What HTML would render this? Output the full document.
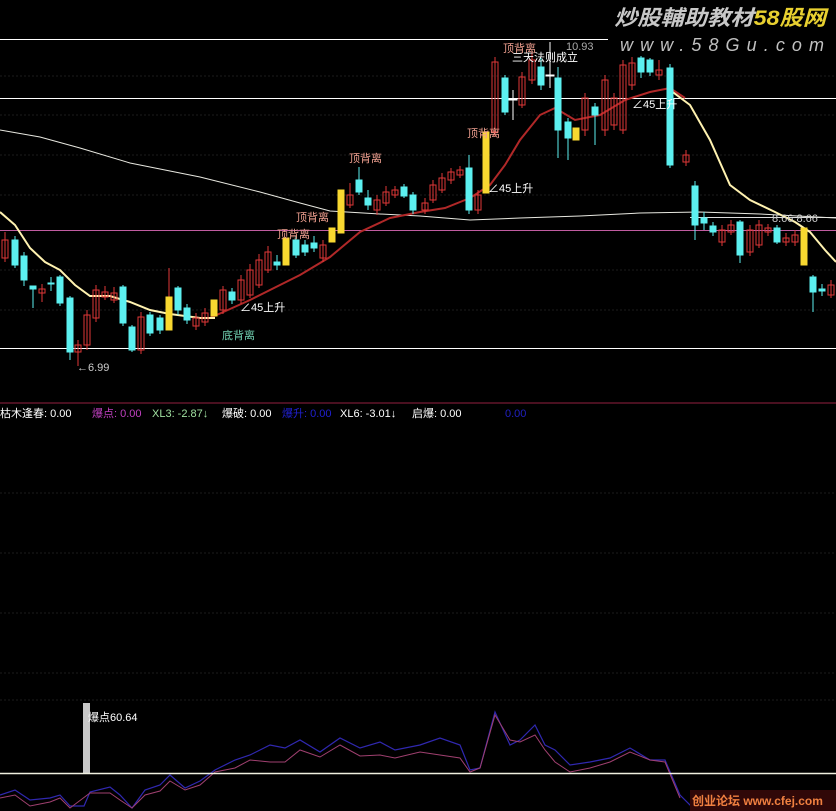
<!DOCTYPE html>
<html><head><meta charset="utf-8"><style>
html,body{margin:0;padding:0;background:#000;width:836px;height:811px;overflow:hidden}
svg{display:block}
text{font-family:"Liberation Sans","Noto Sans CJK SC",sans-serif}
</style></head><body>
<svg width="836" height="811" viewBox="0 0 836 811" xmlns="http://www.w3.org/2000/svg">
<rect width="836" height="811" fill="#000"/>
<g stroke="#1c1c1c" stroke-width="1" stroke-dasharray="2,2">
<line x1="0" y1="76" x2="836" y2="76"/><line x1="0" y1="115" x2="836" y2="115"/>
<line x1="0" y1="155" x2="836" y2="155"/><line x1="0" y1="195" x2="836" y2="195"/>
<line x1="0" y1="270" x2="836" y2="270"/><line x1="0" y1="310" x2="836" y2="310"/>
<line x1="0" y1="493" x2="836" y2="493"/><line x1="0" y1="553" x2="836" y2="553"/>
<line x1="0" y1="613" x2="836" y2="613"/><line x1="0" y1="673" x2="836" y2="673"/>
<line x1="0" y1="700" x2="836" y2="700"/>
</g>
<line x1="0" y1="403" x2="836" y2="403" stroke="#4a1020" stroke-width="2"/>
<line x1="0" y1="39.5" x2="608" y2="39.5" stroke="#fff"/>
<line x1="0" y1="98.5" x2="836" y2="98.5" stroke="#fff"/>
<line x1="0" y1="230.5" x2="836" y2="230.5" stroke="#c05ca0"/>
<line x1="690" y1="217.5" x2="836" y2="217.5" stroke="#ddd"/>
<line x1="0" y1="348.5" x2="836" y2="348.5" stroke="#fff"/>
<polyline fill="none" stroke="#e8e8e0" stroke-width="1" points="0,130 40,137 80,148 130,163 200,177 260,192 300,203 330,211 380,214 420,216 470,220 520,218 580,216 640,213 700,212 760,214 836,218"/>
<polyline fill="none" stroke="#b02828" stroke-width="2" points="210,318 250,300 280,285 300,275 330,257 360,232 390,218 420,212 445,208 470,198 490,185 505,165 520,140 540,115 555,108 575,120 600,115 625,100 650,92 670,88 685,98"/>
<polyline fill="none" stroke="#fff2b0" stroke-width="2" points="0,212 15,225 30,248 45,262 60,270 75,285 90,296 110,296 130,302 150,310 170,314 200,318 215,318"/>
<polyline fill="none" stroke="#fff2b0" stroke-width="2" points="670,90 690,105 710,140 730,185 750,200 775,212 795,222 810,232 825,250 836,262"/>
<g stroke-width="1">
<g stroke="#e03838" fill="none">
<line x1="5" y1="232" x2="5" y2="262"/><rect x="2" y="240" width="6" height="18"/>
<line x1="42" y1="284" x2="42" y2="302"/><rect x="39" y="289" width="6" height="4"/>
<line x1="78" y1="340" x2="78" y2="366"/><rect x="75" y="345" width="6" height="7"/>
<line x1="87" y1="310" x2="87" y2="350"/><rect x="84" y="315" width="6" height="30"/>
<line x1="96" y1="285" x2="96" y2="322"/><rect x="93" y="290" width="6" height="28"/>
<line x1="105" y1="286" x2="105" y2="300"/><rect x="102" y="292" width="6" height="5"/>
<line x1="114" y1="287" x2="114" y2="303"/><rect x="111" y="293" width="6" height="7"/>
<line x1="141" y1="312" x2="141" y2="354"/><rect x="138" y="317" width="6" height="33"/>
<line x1="169" y1="268" x2="169" y2="300"/>
<line x1="196" y1="313" x2="196" y2="330"/><rect x="193" y="318" width="6" height="8"/>
<line x1="205" y1="308" x2="205" y2="326"/><rect x="202" y="313" width="6" height="9"/>
<line x1="223" y1="286" x2="223" y2="314"/><rect x="220" y="290" width="6" height="20"/>
<line x1="241" y1="275" x2="241" y2="304"/><rect x="238" y="280" width="6" height="20"/>
<line x1="250" y1="264" x2="250" y2="298"/><rect x="247" y="270" width="6" height="25"/>
<line x1="259" y1="254" x2="259" y2="288"/><rect x="256" y="260" width="6" height="25"/>
<line x1="268" y1="246" x2="268" y2="273"/><rect x="265" y="252" width="6" height="18"/>
<line x1="323" y1="240" x2="323" y2="262"/><rect x="320" y="245" width="6" height="13"/>
<line x1="350" y1="183" x2="350" y2="208"/><rect x="347" y="195" width="6" height="10"/>
<line x1="377" y1="195" x2="377" y2="215"/><rect x="374" y="200" width="6" height="10"/>
<line x1="386" y1="186" x2="386" y2="206"/><rect x="383" y="192" width="6" height="11"/>
<line x1="395" y1="186" x2="395" y2="198"/><rect x="392" y="190" width="6" height="5"/>
<line x1="425" y1="198" x2="425" y2="214"/><rect x="422" y="203" width="6" height="7"/>
<line x1="433" y1="180" x2="433" y2="203"/><rect x="430" y="185" width="6" height="15"/>
<line x1="442" y1="173" x2="442" y2="193"/><rect x="439" y="178" width="6" height="12"/>
<line x1="451" y1="168" x2="451" y2="184"/><rect x="448" y="172" width="6" height="8"/>
<line x1="460" y1="166" x2="460" y2="178"/><rect x="457" y="170" width="6" height="5"/>
<line x1="478" y1="190" x2="478" y2="214"/><rect x="475" y="195" width="6" height="15"/>
<line x1="495" y1="57" x2="495" y2="136"/><rect x="492" y="62" width="6" height="70"/>
<line x1="522" y1="72" x2="522" y2="108"/><rect x="519" y="77" width="6" height="28"/>
<line x1="532" y1="52" x2="532" y2="84"/><rect x="529" y="60" width="6" height="20"/>
<line x1="585" y1="93" x2="585" y2="136"/><rect x="582" y="98" width="6" height="32"/>
<line x1="605" y1="75" x2="605" y2="136"/><rect x="602" y="80" width="6" height="50"/>
<line x1="614" y1="93" x2="614" y2="130"/><rect x="611" y="98" width="6" height="27"/>
<line x1="623" y1="60" x2="623" y2="134"/><rect x="620" y="65" width="6" height="65"/>
<line x1="632" y1="57" x2="632" y2="90"/><rect x="629" y="63" width="6" height="22"/>
<line x1="659" y1="60" x2="659" y2="80"/><rect x="656" y="70" width="6" height="5"/>
<line x1="686" y1="150" x2="686" y2="166"/><rect x="683" y="155" width="6" height="7"/>
<line x1="722" y1="225" x2="722" y2="246"/><rect x="719" y="230" width="6" height="12"/>
<line x1="731" y1="220" x2="731" y2="235"/><rect x="728" y="225" width="6" height="7"/>
<line x1="750" y1="225" x2="750" y2="256"/><rect x="747" y="230" width="6" height="22"/>
<line x1="759" y1="220" x2="759" y2="248"/><rect x="756" y="225" width="6" height="20"/>
<line x1="768" y1="224" x2="768" y2="236"/><rect x="765" y="228" width="6" height="4"/>
<line x1="786" y1="233" x2="786" y2="246"/><rect x="783" y="238" width="6" height="4"/>
<line x1="795" y1="230" x2="795" y2="246"/><rect x="792" y="235" width="6" height="7"/>
<line x1="831" y1="280" x2="831" y2="298"/><rect x="828" y="285" width="6" height="10"/>
</g>
<g stroke="#5cf0f0" fill="#5cf0f0">
<line x1="15" y1="236" x2="15" y2="268"/><rect x="12" y="240" width="6" height="25"/>
<line x1="24" y1="252" x2="24" y2="286"/><rect x="21" y="256" width="6" height="24"/>
<line x1="33" y1="286" x2="33" y2="308"/><rect x="30" y="286" width="6" height="3"/>
<line x1="51" y1="277" x2="51" y2="291"/><rect x="48" y="283" width="6" height="1"/>
<line x1="60" y1="275" x2="60" y2="306"/><rect x="57" y="277" width="6" height="26"/>
<line x1="70" y1="296" x2="70" y2="360"/><rect x="67" y="298" width="6" height="54"/>
<line x1="123" y1="285" x2="123" y2="326"/><rect x="120" y="287" width="6" height="36"/>
<line x1="132" y1="325" x2="132" y2="352"/><rect x="129" y="327" width="6" height="23"/>
<line x1="150" y1="312" x2="150" y2="336"/><rect x="147" y="315" width="6" height="18"/>
<line x1="160" y1="315" x2="160" y2="334"/><rect x="157" y="318" width="6" height="12"/>
<line x1="178" y1="286" x2="178" y2="315"/><rect x="175" y="288" width="6" height="22"/>
<line x1="187" y1="304" x2="187" y2="324"/><rect x="184" y="308" width="6" height="12"/>
<line x1="232" y1="288" x2="232" y2="304"/><rect x="229" y="292" width="6" height="8"/>
<line x1="277" y1="255" x2="277" y2="270"/><rect x="274" y="262" width="6" height="3"/>
<line x1="296" y1="236" x2="296" y2="258"/><rect x="293" y="240" width="6" height="15"/>
<line x1="305" y1="240" x2="305" y2="256"/><rect x="302" y="245" width="6" height="7"/>
<line x1="314" y1="236" x2="314" y2="252"/><rect x="311" y="243" width="6" height="5"/>
<line x1="359" y1="167" x2="359" y2="195"/><rect x="356" y="180" width="6" height="12"/>
<line x1="368" y1="190" x2="368" y2="210"/><rect x="365" y="198" width="6" height="7"/>
<line x1="404" y1="184" x2="404" y2="198"/><rect x="401" y="187" width="6" height="9"/>
<line x1="413" y1="192" x2="413" y2="214"/><rect x="410" y="195" width="6" height="15"/>
<line x1="469" y1="155" x2="469" y2="214"/><rect x="466" y="168" width="6" height="42"/>
<line x1="505" y1="75" x2="505" y2="115"/><rect x="502" y="78" width="6" height="34"/>
<line x1="541" y1="58" x2="541" y2="90"/><rect x="538" y="67" width="6" height="18"/>
<line x1="558" y1="67" x2="558" y2="158"/><rect x="555" y="78" width="6" height="52"/>
<line x1="568" y1="118" x2="568" y2="160"/><rect x="565" y="122" width="6" height="16"/>
<line x1="595" y1="103" x2="595" y2="145"/><rect x="592" y="107" width="6" height="8"/>
<line x1="641" y1="56" x2="641" y2="78"/><rect x="638" y="58" width="6" height="14"/>
<line x1="650" y1="58" x2="650" y2="76"/><rect x="647" y="60" width="6" height="12"/>
<line x1="670" y1="64" x2="670" y2="168"/><rect x="667" y="68" width="6" height="97"/>
<line x1="695" y1="181" x2="695" y2="240"/><rect x="692" y="186" width="6" height="39"/>
<line x1="704" y1="212" x2="704" y2="230"/><rect x="701" y="218" width="6" height="5"/>
<line x1="713" y1="222" x2="713" y2="236"/><rect x="710" y="226" width="6" height="6"/>
<line x1="740" y1="220" x2="740" y2="263"/><rect x="737" y="222" width="6" height="33"/>
<line x1="777" y1="225" x2="777" y2="244"/><rect x="774" y="228" width="6" height="14"/>
<line x1="813" y1="275" x2="813" y2="312"/><rect x="810" y="277" width="6" height="15"/>
<line x1="822" y1="284" x2="822" y2="296"/><rect x="819" y="289" width="6" height="2"/>
</g>
<g stroke="#ffffff" fill="#ffffff">
<line x1="513" y1="90" x2="513" y2="120"/><rect x="509" y="99" width="8" height="1"/>
<line x1="550" y1="42" x2="550" y2="88"/><rect x="546" y="75" width="8" height="1"/>
</g>
<g stroke="#f8d830" fill="#f8d830">
<rect x="166" y="297" width="6" height="33"/>
<rect x="211" y="300" width="6" height="16"/>
<rect x="283" y="238" width="6" height="27"/>
<rect x="329" y="228" width="6" height="14"/>
<rect x="338" y="190" width="6" height="43"/>
<rect x="483" y="132" width="6" height="61"/>
<rect x="573" y="128" width="6" height="12"/>
<rect x="801" y="228" width="6" height="37"/>
</g>
</g>
<g font-size="11">
<text x="349" y="162" fill="#f0a090">顶背离</text>
<text x="296" y="221" fill="#f0a090">顶背离</text>
<text x="277" y="238" fill="#f0a090">顶背离</text>
<text x="467" y="137" fill="#f0a090">顶背离</text>
<text x="503" y="52" fill="#f0a090">顶背离</text>
<text x="512" y="61" fill="#fff">三天法则成立</text>
<text x="566" y="50" fill="#aaa">10.93</text>
<text x="240" y="311" fill="#fff">∠45上升</text>
<text x="488" y="192" fill="#fff">∠45上升</text>
<text x="632" y="108" fill="#fff">∠45上升</text>
<text x="222" y="339" fill="#70d0b0">底背离</text>
<text x="77" y="371" fill="#ccc">←6.99</text>
<text x="772" y="222" fill="#ccc">8.66 8.66</text>
</g>
<text x="614" y="25" font-size="21" font-style="italic" fill="#c8c8c8" font-weight="bold" textLength="212" lengthAdjust="spacingAndGlyphs">炒股輔助教材<tspan fill="#e8d030">58股网</tspan></text>
<text x="620" y="51" font-size="18" font-style="italic" fill="#c0c0c0" textLength="204" lengthAdjust="spacing">www.58Gu.com</text>
<g font-size="11">
<text x="0" y="417" fill="#fff">枯木逢春: 0.00</text>
<text x="92" y="417" fill="#c040c0">爆点: 0.00</text>
<text x="152" y="417" fill="#a0e0a0">XL3: -2.87↓</text>
<text x="222" y="417" fill="#fff">爆破: 0.00</text>
<text x="282" y="417" fill="#2020d0">爆升: 0.00</text>
<text x="340" y="417" fill="#fff">XL6: -3.01↓</text>
<text x="412" y="417" fill="#fff">启爆: 0.00</text>
<text x="505" y="417" fill="#2020c0">0.00</text>
</g>
<rect x="83" y="703" width="7" height="70" fill="#c8c8c8"/>
<text x="88" y="721" font-size="11" fill="#fff">爆点60.64</text>
<polyline fill="none" stroke="#3028b0" stroke-width="1.2" points="0,795 15,790 30,800 50,798 60,795 70,806 84,806 90,792 110,787 120,795 132,808 145,790 160,785 170,775 185,788 200,781 215,770 235,760 250,755 270,745 285,748 300,740 320,752 340,738 360,748 380,742 395,750 420,745 440,738 460,745 470,770 480,768 495,712 510,745 520,740 535,725 545,745 555,750 570,765 590,762 610,758 630,748 650,760 665,760 680,795 690,805 700,800 720,805 760,810 836,808"/>
<polyline fill="none" stroke="#a04070" stroke-width="1" points="0,798 15,795 30,806 50,802 60,798 70,808 90,793 110,793 120,800 132,808 145,795 160,791 170,781 185,790 200,785 215,772 235,768 250,760 270,762 285,762 300,750 320,757 340,745 360,756 380,755 395,758 420,752 440,755 460,758 470,772 480,768 495,715 510,740 520,742 535,735 545,750 555,762 570,772 590,768 610,762 630,752 650,760 665,762 680,798"/>
<line x1="0" y1="773.5" x2="836" y2="773.5" stroke="#f0f0e0" stroke-width="1.5"/>
<rect x="690" y="790" width="146" height="21" fill="#300808"/>
<text x="692" y="805" font-size="12" font-weight="bold" fill="#f08040">创业论坛 www.cfej.com</text>
</svg>
</body></html>
